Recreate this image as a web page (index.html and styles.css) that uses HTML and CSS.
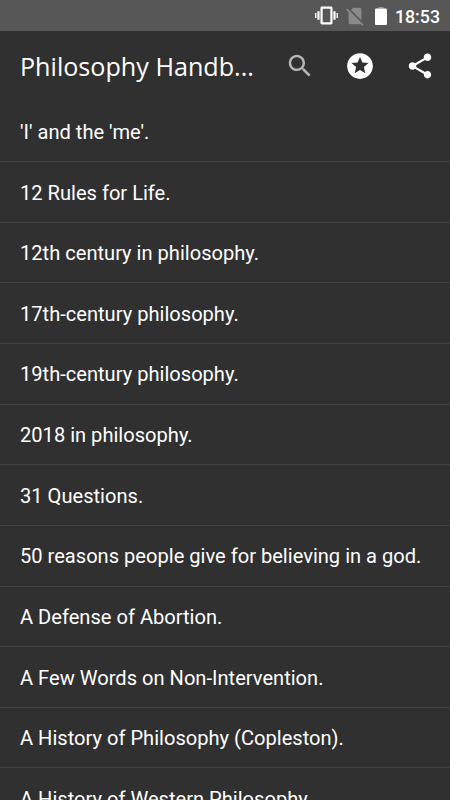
FILE: index.html
```html
<!DOCTYPE html>
<html lang="en">

<head>
    <meta charset="UTF-8">
    <meta name="viewport" content="width=device-width, initial-scale=1.0">
    <title>Philosophy Handbook</title>
    <link rel="stylesheet" href="styles.css">
</head>

<body>
    <div class="status-bar">
        <svg class="vibrate" viewBox="0 0 24 24">
            <path d="M0 9.500h1.500v5H0zM2.500 7.500h2.300v9H2.500zM22.500 9.500H24v5h-1.500zM19.200 7.500h2.300v9h-2.300zM16.800 2.700H7.200C6.400 2.700 5.700 3.400 5.700 4.200v15.600c0 .800.700 1.500 1.500 1.500h9.600c.800 0 1.500-.700 1.500-1.500V4.200c0-.800-.700-1.500-1.500-1.500zM16 19H8V5h8v14z" />
        </svg>
        <svg class="no-sim" viewBox="0 0 24 24">
            <path d="M18.990 5c0-1.100-.890-2-1.990-2h-7L7.660 5.340 19 16.680 18.990 5zM3.650 3.880L2.380 5.150 5 7.770V19c0 1.100.900 2 2 2h10.010c.350 0 .670-.100.960-.260l1.880 1.880 1.270-1.270L3.650 3.880z" />
        </svg>
        <svg class="battery" viewBox="0 0 12 18">
            <path class="cap" d="M3.500 0h5v1.500h-5z" />
            <path d="M1 1.500h10q1 0 1 1V17q0 1-1 1H1q-1 0-1-1V2.500q0-1 1-1z" />
        </svg>
        <span class="clock">18:53</span>
    </div>

    <div class="toolbar">
        <h1>Philosophy Handb...</h1>
        <svg class="search" viewBox="0 0 24 24">
            <path d="M15.500 14h-.790l-.280-.270C15.410 12.590 16 11.110 16 9.500 16 5.910 13.090 3 9.500 3S3 5.910 3 9.500 5.910 16 9.500 16c1.610 0 3.090-.590 4.230-1.570l.270.280v.790l5 4.990L20.490 19l-4.990-5zm-6 0C7.010 14 5 11.990 5 9.500S7.010 5 9.500 5 14 7.010 14 9.500 11.990 14 9.500 14z" />
        </svg>
        <svg viewBox="0 0 24 24">
            <path d="M11.990 1.700C6.300 1.700 1.700 6.300 1.700 12s4.600 10.300 10.300 10.300S22.300 17.700 22.300 12 17.700 1.700 11.990 1.700zm4.240 16L12 15.150 7.770 17.700l1.120-4.810-3.730-3.230 4.920-.420L12 4.700l1.920 4.530 4.920.420-3.730 3.230L16.230 17.700z" />
        </svg>
        <svg viewBox="0 0 24 24">
            <path d="M18 16.080c-.760 0-1.440.300-1.960.770L8.910 12.700c.050-.230.090-.460.090-.700s-.040-.470-.090-.700l7.050-4.110c.540.500 1.250.810 2.040.810 1.660 0 3-1.340 3-3s-1.340-3-3-3-3 1.340-3 3c0 .240.040.470.090.700L8.040 9.810C7.500 9.310 6.790 9 6 9c-1.660 0-3 1.340-3 3s1.340 3 3 3c.790 0 1.500-.310 2.040-.810l7.120 4.160c-.050.210-.080.430-.080.650 0 1.610 1.310 2.920 2.920 2.920s2.920-1.310 2.920-2.920-1.310-2.920-2.920-2.920z" />
        </svg>
    </div>

    <ul class="list">
        <li>'I' and the 'me'.</li>
        <li>12 Rules for Life.</li>
        <li>12th century in philosophy.</li>
        <li>17th-century philosophy.</li>
        <li>19th-century philosophy.</li>
        <li>2018 in philosophy.</li>
        <li>31 Questions.</li>
        <li>50 reasons people give for believing in a god.</li>
        <li>A Defense of Abortion.</li>
        <li>A Few Words on Non-Intervention.</li>
        <li>A History of Philosophy (Copleston).</li>
        <li>A History of Western Philosophy.</li>
    </ul>
</body>

</html>
```
FILE: styles.css
```css
* {
    box-sizing: border-box;
}

body {
    display: flex;
    flex-direction: column;
    height: 100vh;
    margin: 0;
    overflow: hidden;
    background: #303030;
    color: #fff;
    font-family: Roboto, sans-serif;
}

svg {
    flex: none;
    fill: #fff;
}

/* status bar */
.status-bar {
    display: flex;
    flex: none;
    align-items: center;
    justify-content: flex-end;
    height: 31px;
    padding-right: 10px;
    background: #575757;
}

.vibrate {
    width: 23px;
    height: 23px;
    margin-right: 6px;
}

.no-sim {
    width: 22px;
    height: 22px;
    margin-right: 9px;
    opacity: 0.3;
}

.battery {
    width: 12px;
    height: 18px;
    margin-right: 8px;
}

.battery .cap {
    opacity: 0.4;
}

.clock {
    padding-top: 1px;
    font-size: 17.800px;
    font-weight: 500;
}

/* toolbar */
.toolbar {
    display: flex;
    flex: none;
    align-items: center;
    gap: 30px;
    height: 70px;
    padding: 0 15px 0 20px;
}

.toolbar h1 {
    flex: 1;
    margin: 0;
    font: 400 25.150px "Open Sans", sans-serif;
    white-space: nowrap;
}

.toolbar svg {
    width: 30px;
    height: 30px;
}

.toolbar .search {
    fill: #b5b5b5;
}

/* topics */
.list {
    margin: 0;
    padding: 0.400px 0 0;
    list-style: none;
}

.list li {
    display: flex;
    align-items: center;
    height: 60.650px;
    padding: 1.300px 0 0 20px;
    border-bottom: 1px solid #434343;
    font-size: 20.100px;
    white-space: nowrap;
}
```
